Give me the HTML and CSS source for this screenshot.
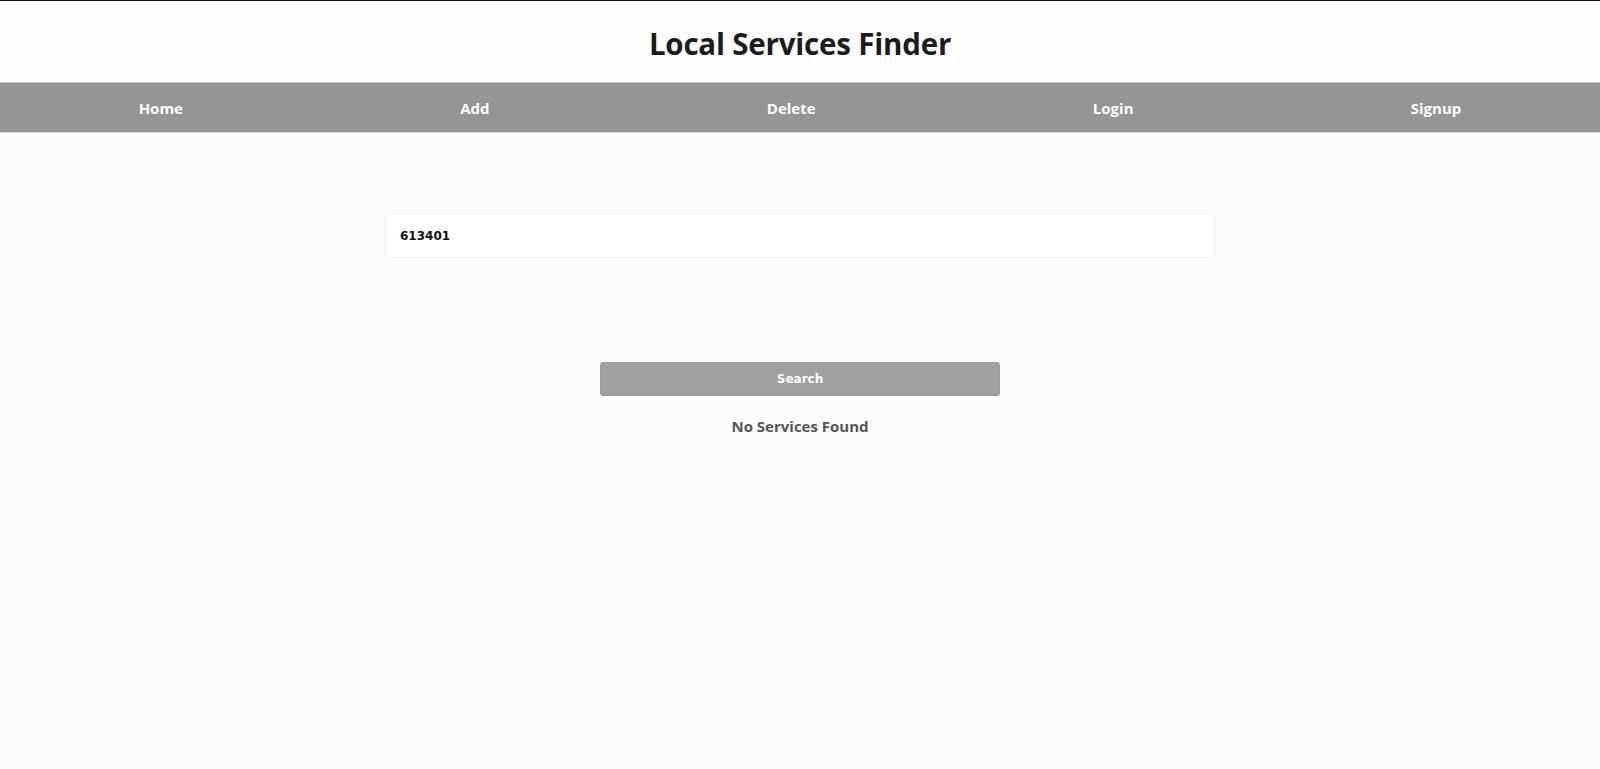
FILE: index.html
```html
<!DOCTYPE html>
<html>
<head>
<meta charset="utf-8">
<link rel="stylesheet" href="styles.css">
</head>
<body>
<header class="top">
  <h1 class="title">Local Services Finder</h1>
</header>
<nav class="nav">
  <a class="nav-item">Home</a>
  <a class="nav-item">Add</a>
  <a class="nav-item">Delete</a>
  <a class="nav-item">Login</a>
  <a class="nav-item">Signup</a>
</nav>
<main class="main">
  <input class="pin" type="text" value="613401">
  <button class="search">Search</button>
  <p class="empty">No Services Found</p>
</main>
</body>
</html>
```
FILE: styles.css
```css
html, body {
  margin: 0;
  padding: 0;
}
body {
  background: #fcfcfc;
  font-family: "Open Sans", "Noto Sans", sans-serif;
  border-top: 1px solid #111;
}
.top {
  background: #fefefe;
  height: 81px;
  display: flex;
  align-items: center;
  justify-content: center;
}
.title {
  margin: 0;
  font-size: 29.5px;
  font-weight: 700;
  color: #1c1c1c;
  letter-spacing: -0.2px;
  padding-top: 4px;
}
.nav {
  display: flex;
  justify-content: space-around;
  align-items: center;
  height: 49px;
  background: #959595;
  border-top: 1px solid #c9c9c9;
  border-bottom: 1px solid #d6d6d6;
}
.nav-item {
  color: #fff;
  font-weight: 700;
  font-size: 15px;
}
.main {
  display: flex;
  flex-direction: column;
  align-items: center;
  padding-top: 80px;
}
.pin {
  box-sizing: border-box;
  width: 830px;
  height: 45px;
  border: 1px solid #f0f0f0;
  border-radius: 3px;
  background: #fff;
  padding: 0 14px;
  font-family: "DejaVu Sans", sans-serif;
  font-weight: 700;
  font-size: 12px;
  color: #111;
  outline: none;
}
.search {
  margin-top: 104px;
  width: 400px;
  height: 34px;
  border: 1px solid #999;
  border-radius: 3px;
  background: #a0a0a0;
  color: #fff;
  font-family: "DejaVu Sans", sans-serif;
  font-weight: 700;
  font-size: 12px;
}
.empty {
  margin: 20px 0 0;
  font-size: 15px;
  font-weight: 700;
  color: #555;
}
```
